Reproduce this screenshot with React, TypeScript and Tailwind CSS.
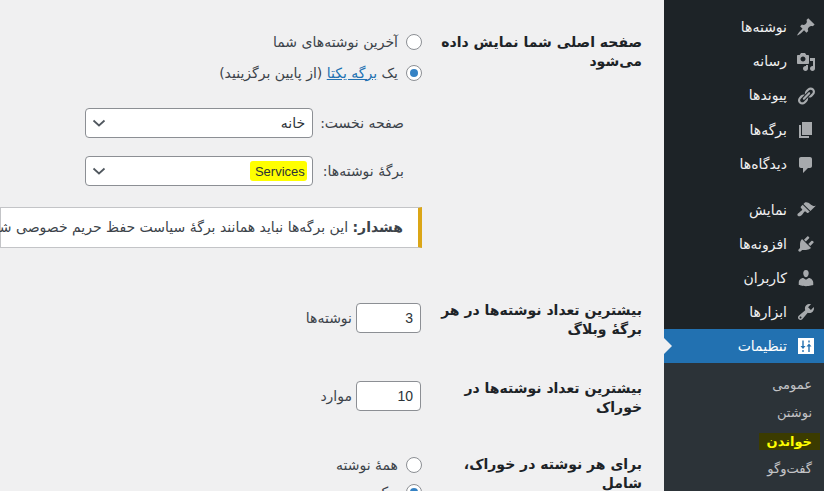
import React from 'react';

const Dash: React.FC<{ d: string; className?: string }> = ({ d, className }) => (
  <svg viewBox="0 0 20 20" className={className ?? 'w-5 h-5'} fill="currentColor">
    <path d={d} />
  </svg>
);

const icons = {
  post: 'M10.44 3.02l1.82-1.82 6.36 6.35-1.83 1.82c-1.05-.68-2.48-.57-3.41.36l-.75.75c-.92.93-1.04 2.35-.35 3.41l-1.83 1.82-2.41-2.41-2.8 2.79c-.42.42-3.38 2.71-3.8 2.29s1.86-3.39 2.28-3.81l2.79-2.79L4.1 9.36l1.83-1.82c1.05.69 2.48.57 3.4-.36l.75-.75c.93-.92 1.05-2.35.36-3.41z',
  media: 'M13 11V4c0-.55-.45-1-1-1h-1.67L9 1H5L3.67 3H2c-.55 0-1 .45-1 1v7c0 .55.45 1 1 1h10c.55 0 1-.45 1-1zM7 4.5c1.38 0 2.5 1.12 2.5 2.5S8.38 9.5 7 9.5 4.5 8.38 4.5 7 5.62 4.5 7 4.5zM14 6h5v10.5c0 1.38-1.12 2.5-2.5 2.5S14 17.88 14 16.5s1.12-2.5 2.5-2.5c.17 0 .34.02.5.05V9h-3V6zm-4 8.05V13h2v3.5c0 1.38-1.12 2.5-2.5 2.5S7 17.88 7 16.5 8.12 14 9.5 14c.17 0 .34.02.5.05z',
  links: 'M17.74 2.76c1.68 1.69 1.68 4.41 0 6.1l-1.53 1.52c-1.12 1.12-2.7 1.47-4.14 1.09l2.62-2.61.76-.77.76-.76c.84-.84.84-2.2 0-3.04-.84-.85-2.2-.85-3.04 0l-.77.76-3.38 3.38c-.37-1.44-.02-3.02 1.1-4.14l1.52-1.53c1.69-1.68 4.42-1.68 6.1 0zM8.59 13.43l5.34-5.34c.42-.42.42-1.1 0-1.52-.44-.43-1.13-.39-1.53 0l-5.33 5.34c-.42.42-.42 1.1 0 1.52.44.43 1.13.39 1.52 0zm-.76 2.29l4.14-4.15c.38 1.44.03 3.02-1.09 4.14l-1.52 1.53c-1.69 1.68-4.41 1.68-6.1 0-1.68-1.68-1.68-4.42 0-6.1l1.53-1.52c1.12-1.12 2.7-1.47 4.14-1.1l-4.14 4.15c-.85.84-.85 2.2 0 3.05.84.84 2.2.84 3.04 0z',
  page: 'M6 15V2h10v13H6zm-1 1h8v2H3V5h2v11z',
  comments: 'M5 2h9c1.1 0 2 .9 2 2v7c0 1.1-.9 2-2 2h-2l-5 5v-5H5c-1.1 0-2-.9-2-2V4c0-1.1.9-2 2-2z',
  appearance: 'M14.48 11.06L7.41 3.99l1.5-1.5c.5-.56 2.3-.47 3.51.32 1.21.8 1.43 1.28 2.91 2.1 1.18.64 2.45 1.26 4.45.85zm-.71.71L6.7 4.7 4.93 6.47c-.39.39-.39 1.02 0 1.41l1.06 1.06c.39.39.39 1.03 0 1.42-.6.6-1.43 1.11-2.21 1.69-.35.26-.7.53-1.01.84C1.43 13.23.91 14.86 1.9 15.85c.99.99 2.62.47 3.97-.88.31-.31.58-.66.84-1.01.58-.78 1.09-1.61 1.69-2.21.39-.39 1.03-.39 1.42 0l1.06 1.06c.39.39 1.02.39 1.41 0z',
  plugins: 'M13.11 4.36L9.87 7.6 8 5.73l3.24-3.24c.35-.34 1.05-.2 1.56.32.52.51.66 1.21.31 1.55zm-8 1.77l.91-1.12 9.01 9.01-1.19.84c-.71.71-2.63 1.16-3.82 1.16H6.14L4.9 17.26c-.59.59-1.54.59-2.12 0-.59-.58-.59-1.53 0-2.12l1.24-1.24v-3.88c0-1.13.4-3.19 1.09-3.89zm7.26 3.97l3.24-3.24c.34-.35 1.04-.21 1.55.31.52.51.66 1.21.31 1.55l-3.24 3.25z',
  users: 'M10 9.25c-2.27 0-2.73-3.44-2.73-3.44C7 4.02 7.82 2 9.97 2c2.16 0 2.98 2.02 2.71 3.81 0 0-.41 3.44-2.68 3.44zm0 2.57L12.72 10c2.39 0 4.52 2.33 4.52 4.53v2.49s-3.65 1.13-7.24 1.13c-3.65 0-7.24-1.13-7.24-1.13v-2.49c0-2.25 1.94-4.48 4.47-4.48z',
  tools: 'M16.68 9.77c-1.34 1.34-3.3 1.67-4.95.99l-5.41 6.52c-.99.99-2.59.99-3.58 0s-.99-2.59 0-3.57l6.52-5.42c-.68-1.65-.35-3.61.99-4.95 1.28-1.28 3.12-1.62 4.72-1.06l-2.89 2.89 2.82 2.82 2.86-2.87c.53 1.58.18 3.39-1.08 4.65zM3.81 16.21c.4.39 1.04.39 1.43 0 .4-.4.4-1.04 0-1.43-.39-.4-1.03-.4-1.43 0-.39.39-.39 1.03 0 1.43z',
};

const MenuItem: React.FC<{ icon: string; label: string; tall?: boolean }> = ({ icon, label, tall }) => (
  <div className={`flex items-center pr-[8px] text-[#f0f0f1] text-[14px] ${tall ? 'h-[34.4px]' : 'h-[34px]'}`}>
    <span className="w-[20px] h-[20px] text-[#a7aaad]">
      <Dash d={icon} />
    </span>
    <span className="mr-[9px]">{label}</span>
  </div>
);

const Sidebar = () => (
  <aside className="w-[160px] shrink-0 bg-[#1d2327] pt-[10px]">
    <MenuItem tall icon={icons.post} label="نوشته‌ها" />
    <MenuItem tall icon={icons.media} label="رسانه" />
    <MenuItem tall icon={icons.links} label="پیوندها" />
    <MenuItem tall icon={icons.page} label="برگه‌ها" />
    <MenuItem tall icon={icons.comments} label="دیدگاه‌ها" />
    <div className="h-[11.4px]" />
    <MenuItem icon={icons.appearance} label="نمایش" />
    <MenuItem icon={icons.plugins} label="افزونه‌ها" />
    <MenuItem icon={icons.users} label="کاربران" />
    <MenuItem icon={icons.tools} label="ابزارها" />

    <div className="relative flex items-center h-[34px] pr-[8px] bg-[#2271b1] text-white text-[14px]">
      <svg viewBox="0 0 20 20" className="w-5 h-5">
        <rect x="2" y="2" width="16" height="16" fill="#fff" />
        <path d="M6.3 4.5h1.4v5.5h1.8L7 13 4.5 10h1.8zM6.3 14h1.4v2H6.3zM12.3 16h1.4v-5.5h1.8L13 7.5 10.5 10.5h1.8zM12.3 4.5h1.4v2h-1.4z" fill="#2271b1" />
      </svg>
      <span className="mr-[9px]">تنظیمات</span>
      <span className="absolute left-0 top-1/2 -translate-y-1/2 border-y-[8px] border-y-transparent border-l-[8px] border-l-[#f0f0f1]" />
    </div>

    <div className="bg-[#2c3338] pt-[8px] pb-[8px] text-[13px] text-[#c3c4c7]">
      <div className="h-[28px] leading-[28px] pr-[12px]">عمومی</div>
      <div className="h-[28px] leading-[28px] pr-[12px]">نوشتن</div>
      <div className="h-[28px] flex items-center">
        <span className="mr-[4px] w-[61px] h-[17px] leading-[17px] pr-[8px] bg-[#3b3b00] text-[#ffff00] font-bold">خواندن</span>
      </div>
      <div className="h-[28px] leading-[28px] pr-[12px]">گفت‌وگو</div>
    </div>
  </aside>
);

const Radio: React.FC<{ checked?: boolean }> = ({ checked }) => (
  <span className="w-[16px] h-[16px] shrink-0 rounded-full border border-[#8c8f94] bg-white flex items-center justify-center">
    {checked && <span className="w-[8px] h-[8px] rounded-full bg-[#3582c4]" />}
  </span>
);

const Chevron = () => (
  <svg viewBox="0 0 16 16" className="w-[16px] h-[16px] text-[#50575e]" fill="none" stroke="currentColor" strokeWidth="1.7">
    <path d="M2.5 5.5L8 10.5l5.5-5" />
  </svg>
);

const SelectBox: React.FC<{ children: React.ReactNode }> = ({ children }) => (
  <div className="w-[228px] h-[30px] bg-white border border-[#8c8f94] rounded-[4px] flex items-center justify-between pr-[7px] pl-[5px] text-[#2c3338]">
    <span>{children}</span>
    <Chevron />
  </div>
);

const NumberBox: React.FC<{ value: string }> = ({ value }) => (
  <div className="w-[65px] h-[30px] mr-[1px] bg-white border border-[#8c8f94] rounded-[4px] flex items-center pr-[7px] text-[#2c3338]">
    <span className="font-['Liberation_Sans',sans-serif]">{value}</span>
  </div>
);

const Row: React.FC<{ title: string; className: string; children: React.ReactNode }> = ({ title, className, children }) => (
  <div className={`flex ${className}`}>
    <div className="w-[220px] shrink-0 pl-[14px] font-bold text-[#1d2327] text-[14px] leading-[19px]">{title}</div>
    <div className="flex-1 min-w-0">{children}</div>
  </div>
);

export default function App() {
  return (
    <div dir="rtl" className="flex h-screen overflow-hidden bg-[#f0f0f1] text-[14px] text-[#3c434a] font-['DejaVu_Sans',sans-serif]">
      <Sidebar />
      <main className="flex-1 min-w-0 overflow-hidden pr-[22px] pt-[33px]">
        <Row title="صفحه اصلی شما نمایش داده می‌شود" className="h-[268px]">
          <div className="flex items-center gap-[8px] h-[18px]">
            <Radio />
            <span>آخرین نوشته‌های شما</span>
          </div>
          <div className="flex items-center gap-[8px] h-[18px] mt-[13px]">
            <Radio checked />
            <span>یک <a className="text-[#2271b1] underline">برگه یکتا</a> (از پایین برگزینید)</span>
          </div>
          <div className="flex items-center gap-[7px] mt-[26px] pr-[18px]">
            <span>صفحه نخست:</span>
            <SelectBox>خانه</SelectBox>
          </div>
          <div className="flex items-center gap-[10px] mt-[18px] pr-[18px]">
            <span>برگهٔ نوشته‌ها:</span>
            <SelectBox>
              <span className="font-['Liberation_Sans',sans-serif] text-[13px] bg-[#ffff00] rounded-[3px] pr-[2px] pl-[5px] py-[2.5px] -mr-[2px]">Services</span>
            </SelectBox>
          </div>
          <div className="mt-[21px] h-[41px] bg-white border border-[#c3c4c7] border-r-[4px] border-r-[#dba617] flex items-center pr-[15px] whitespace-nowrap">
            <span><b>هشدار:</b> این برگه‌ها نباید همانند برگهٔ سیاست حفظ حریم خصوصی شما باشند</span>
          </div>
        </Row>
        <Row title="بیشترین تعداد نوشته‌ها در هر برگهٔ وبلاگ" className="h-[78px]">
          <div className="flex items-center gap-[4px] mt-[2px]">
            <NumberBox value="3" />
            <span>نوشته‌ها</span>
          </div>
        </Row>
        <Row title="بیشترین تعداد نوشته‌ها در خوراک" className="h-[75px]">
          <div className="flex items-center gap-[4px] mt-[2px]">
            <NumberBox value="10" />
            <span>موارد</span>
          </div>
        </Row>
        <Row title="برای هر نوشته در خوراک، شامل" className="pt-[1px]">
          <div className="flex items-center gap-[8px] h-[18px] mt-[1px]">
            <Radio />
            <span>همهٔ نوشته</span>
          </div>
          <div className="flex items-center gap-[8px] h-[18px] mt-[9px]">
            <Radio checked />
            <span>چکیده</span>
          </div>
        </Row>
      </main>
    </div>
  );
}
